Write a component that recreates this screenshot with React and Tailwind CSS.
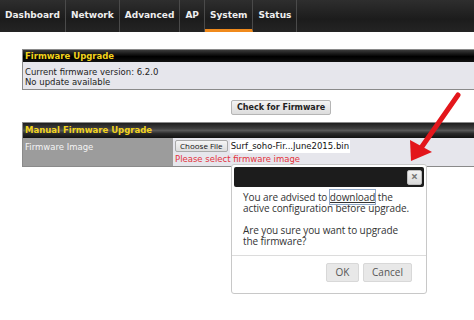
import React from "react";

const navItems = ["Dashboard", "Network", "Advanced", "AP", "System", "Status"];

export default function App() {
  return (
    <div className="relative w-[474px] h-[320px] overflow-hidden bg-white" style={{ fontFamily: "'DejaVu Sans', Verdana, sans-serif" }}>
      {/* Nav */}
      <div className="h-[32px] flex bg-[linear-gradient(#2e2e2e,#1c1c1c_60%,#242424)]">
        {navItems.map((n) => (
          <div
            key={n}
            className={
              "h-full flex items-center px-[5px] border-r border-[#4a4a4a] text-[9px] font-bold text-[#eeeeee] " +
              (n === "System" ? "border-b-[3px] border-b-[#f08a1c] pt-[3px]" : "")
            }
          >
            {n}
          </div>
        ))}
      </div>

      <div className="ml-[22px] w-[518px] mt-[17px]">
        {/* Firmware Upgrade */}
        <div className="border border-[#8a8a8a]">
          <div className="h-[12px] flex items-center px-[2px] bg-[linear-gradient(#3a3a3a,#000_55%,#111)] text-[#f2d31c] text-[8.5px] font-bold">
            Firmware Upgrade
          </div>
          <div className="bg-[#e6e6ec] h-[27px] px-[2px] pt-[6px] text-[8.5px] leading-[9.5px] text-[#222]">
            <div>Current firmware version: 6.2.0</div>
            <div>No update available</div>
          </div>
        </div>

        <div className="flex justify-center mt-[10px]">
          <button className="h-[15px] px-[5px] bg-[linear-gradient(#f4f4f4,#dcdcdc)] border border-[#b5b5b5] rounded-[2px] text-[8px] font-bold text-[#222]">
            Check for Firmware
          </button>
        </div>

        {/* Manual Firmware Upgrade */}
        <div className="mt-[7px] border border-[#8a8a8a]">
          <div className="h-[15px] flex items-center px-[2px] bg-[linear-gradient(#1e1e1e,#3d3d3d_35%,#575757_50%,#2a2a2a_70%,#111)] text-[#f2d31c] text-[8.5px] font-bold">
            Manual Firmware Upgrade
          </div>
          <div className="flex h-[28px]">
            <div className="w-[150px] bg-[#9c9c9c] text-[#f4f4f4] text-[8.5px] px-[2px] pt-[3px]">
              Firmware Image
            </div>
            <div className="flex-1 bg-[#e6e6ec] pl-[2px] pt-[2px]">
              <div className="flex items-center">
                <span
                  className="h-[12px] px-[4px] flex items-center bg-[linear-gradient(#f5f5f5,#dedede)] border border-[#a9a9a9] rounded-[2px] text-[8px] text-[#111]"
                  style={{ fontFamily: "'Open Sans', 'Liberation Sans', sans-serif" }}
                >
                  Choose File
                </span>
                <span className="ml-[2px] text-[8.5px] text-[#111] bg-white px-[1px]">Surf_soho-Fir...June2015.bin</span>
              </div>
              <div className="text-[8.5px] leading-[10px] text-[#e4323c] mt-[1px]">Please select firmware image</div>
            </div>
          </div>
        </div>
      </div>

      {/* Dialog */}
      <div
        className="absolute left-[231px] top-[164px] w-[196px] h-[130px] bg-white border border-[#c8c8c8] rounded-[3px] p-[2px] flex flex-col"
        style={{ fontFamily: "'Open Sans', 'Liberation Sans', sans-serif" }}
      >
        <div className="h-[20px] bg-[#1c1c1c] rounded-[2px] flex items-center justify-end pr-[2px]">
          <div className="w-[15px] h-[15px] bg-[linear-gradient(#f2f2f2,#dadada)] border border-[#bdbdbd] rounded-[2px] flex items-center justify-center text-[#777] text-[12px] font-bold leading-none">
            ×
          </div>
        </div>
        <div className="px-[9px] pt-[5px] text-[10px] leading-[11px] text-[#333] tracking-[-0.1px]">
          <div>
            You are advised to{" "}
            <span className="underline outline outline-1 outline-[#8fa8c8]">download</span> the
          </div>
          <div>active configuration before upgrade.</div>
          <div className="mt-[11px]">Are you sure you want to upgrade</div>
          <div>the firmware?</div>
        </div>
        <div className="mt-auto border-t border-[#dcdcdc] -mx-[2px] flex justify-end gap-[4px] pr-[14px] pt-[7px] pb-[9px]">
          <button className="w-[33px] h-[19px] bg-[#e8e8e8] border border-[#d8d8d8] rounded-[2px] text-[10px] text-[#555]">OK</button>
          <button className="w-[49px] h-[19px] bg-[#e8e8e8] border border-[#d8d8d8] rounded-[2px] text-[10px] text-[#555]">Cancel</button>
        </div>
      </div>

      {/* Red arrow */}
      <svg className="absolute left-0 top-0" width="474" height="320" viewBox="0 0 474 320">
        <line x1="458" y1="95" x2="421" y2="148" stroke="#e3161b" strokeWidth="5" strokeLinecap="round" />
        <polygon points="411,161 410,140 432,152" fill="#e3161b" />
      </svg>
    </div>
  );
}
